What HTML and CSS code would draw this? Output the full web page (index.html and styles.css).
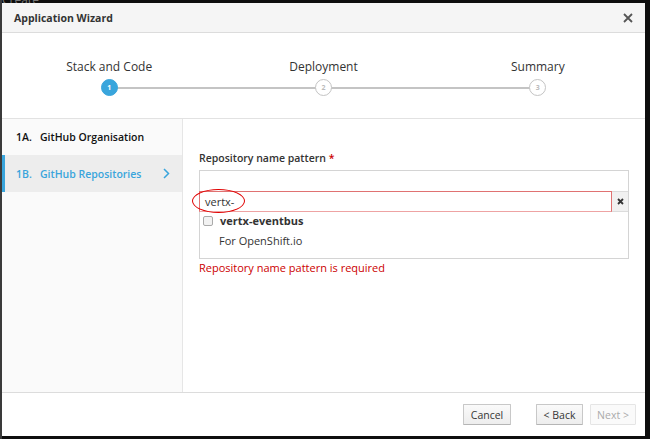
FILE: index.html
```html
<!DOCTYPE html>
<html>
<head>
<meta charset="utf-8">
<link rel="stylesheet" href="styles.css">
</head>
<body>
<div class="backdrop-text">Create</div>
<div class="modal">
  <div class="modal-header">
    <span class="title">Application Wizard</span>
    <svg class="close" width="10" height="10" viewBox="0 0 10 10"><path d="M1 1L9 9M9 1L1 9" stroke="#555" stroke-width="1.8"/></svg>
  </div>
  <div class="steps">
    <div class="step active">
      <div class="step-label">Stack and Code</div>
      <div class="step-track"><span class="dot">1</span></div>
    </div>
    <div class="step">
      <div class="step-label">Deployment</div>
      <div class="step-track"><span class="dot">2</span></div>
    </div>
    <div class="step">
      <div class="step-label">Summary</div>
      <div class="step-track"><span class="dot">3</span></div>
    </div>
  </div>
  <div class="body">
    <div class="sidebar">
      <div class="sub"><span class="num">1A.</span><span>GitHub Organisation</span></div>
      <div class="sub current"><span class="num">1B.</span><span>GitHub Repositories</span>
        <svg class="chev" width="7" height="11" viewBox="0 0 7 11"><path d="M1 1L5.5 5.5L1 10" fill="none" stroke="#39a5dc" stroke-width="1.5"/></svg>
      </div>
    </div>
    <div class="main">
      <div class="label">Repository name pattern <span class="req">*</span></div>
      <div class="picker">
        <div class="input-row">
          <div class="input">vertx-</div>
          <div class="clear"><svg width="7" height="7" viewBox="0 0 7 7"><path d="M1 1L6 6M6 1L1 6" stroke="#333" stroke-width="1.8"/></svg></div>
          <span class="ellipse"></span>
        </div>
        <div class="option">
          <span class="check"></span><span class="opt-name">vertx-eventbus</span>
        </div>
        <div class="opt-desc">For OpenShift.io</div>
      </div>
      <div class="error">Repository name pattern is required</div>
    </div>
  </div>
  <div class="footer">
    <button class="btn cancel">Cancel</button>
    <button class="btn back">&lt; Back</button>
    <button class="btn next disabled">Next &gt;</button>
  </div>
</div>
</body>
</html>
```
FILE: styles.css
```css
html, body {
  margin: 0;
  padding: 0;
}
body {
  width: 650px;
  height: 439px;
  font-family: "Open Sans", "Liberation Sans", sans-serif;
  color: #363636;
  position: relative;
  overflow: hidden;
  box-sizing: border-box;
  padding: 3px 5px 3px 2px;
  background: linear-gradient(to right, #3a3a3a 0, #3a3a3a 2px, #0e0e0e 2px);
}
.backdrop-text {
  position: absolute;
  left: 2px;
  top: -9px;
  font-size: 12px;
  color: #777;
}
.modal {
  width: 643px;
  height: 433px;
  background: #fff;
  display: flex;
  flex-direction: column;
  position: relative;
}
.modal-header {
  height: 29px;
  background: #f5f5f5;
  border-bottom: 1px solid #dcdcdc;
  display: flex;
  align-items: center;
  justify-content: space-between;
  padding: 0 12px 0 12px;
  flex: none;
}
.title {
  font-size: 10.5px;
  font-weight: 700;
  color: #333;
}
.close { margin-top: 1px; }
.steps {
  height: 85px;
  display: flex;
  border-bottom: 1px solid #e2e2e2;
  flex: none;
}
.step {
  flex: 1;
  display: flex;
  flex-direction: column;
  align-items: center;
}
.step-label {
  font-size: 12px;
  color: #333;
  margin-top: 25px;
  line-height: 17px;
}
.step-track {
  position: relative;
  width: 100%;
  height: 17px;
  margin-top: 4px;
  display: flex;
  justify-content: center;
}
.step-track::before {
  content: "";
  position: absolute;
  top: 8px;
  height: 2px;
  background: #c4c4c4;
  left: 0;
  right: 0;
}
.step:first-child .step-track::before { left: 50%; }
.step:last-child .step-track::before { right: 50%; }
.dot {
  position: relative;
  width: 15px;
  height: 15px;
  border-radius: 50%;
  border: 1px solid #c4c4c4;
  background: #fff;
  color: #bbb;
  font-size: 7px;
  font-weight: 700;
  display: flex;
  align-items: center;
  justify-content: center;
}
.step.active .dot {
  background: #39a5dc;
  border-color: #39a5dc;
  color: #fff;
}
.body {
  flex: 1;
  display: flex;
  min-height: 0;
}
.sidebar {
  width: 180px;
  background: #fafafa;
  border-right: 1px solid #e6e6e6;
  flex: none;
}
.sub {
  height: 36px;
  display: flex;
  align-items: center;
  padding-left: 14px;
  font-size: 10.5px;
  font-weight: 600;
  color: #111;
  position: relative;
}
.sub .num { width: 24px; }
.sub.current {
  background: #ededed;
  color: #39a5dc;
  border-left: 3px solid #39a5dc;
  padding-left: 11px;
  height: 37px;
}
.chev {
  position: absolute;
  left: 158px;
  top: 13px;
}
.main {
  flex: 1;
  padding: 32px 14px 0 16px;
  position: relative;
}
.label {
  font-size: 10.5px;
  font-weight: 600;
  color: #333;
  line-height: 14px;
}
.req { color: #c00; }
.picker {
  margin-top: 5px;
  width: 430px;
  border: 1px solid #d4d4d4;
  padding-top: 20px;
  box-sizing: border-box;
  height: 89px;
}
.input-row {
  display: flex;
  height: 21px;
  margin-left: -1px;
  position: relative;
}
.input {
  width: 413px;
  box-sizing: border-box;
  border: 1px solid #e07272;
  border-bottom-color: #eea3a3;
  font-size: 11px;
  color: #333;
  padding-left: 5px;
  line-height: 19px;
}
.clear {
  flex: 1;
  background: #f1f1f1;
  border-top: 1px solid #dcdcdc;
  border-bottom: 1px solid #dcdcdc;
  display: flex;
  align-items: center;
  justify-content: center;
}
.ellipse {
  position: absolute;
  left: -7px;
  top: -2px;
  width: 51px;
  height: 22px;
  border: 1.5px solid #e00000;
  border-radius: 50%;
}
.option {
  display: flex;
  align-items: center;
  height: 19px;
  padding-left: 3px;
  margin-top: -1px;
}
.check {
  width: 8px;
  height: 8px;
  border: 1px solid #aaa;
  border-radius: 2px;
  background: #f2f2f2;
  margin-right: 7px;
}
.opt-name {
  font-size: 11px;
  font-weight: 700;
  color: #333;
}
.opt-desc {
  font-size: 11px;
  color: #333;
  padding-left: 19px;
  line-height: 20px;
  margin-top: 1px;
}
.error {
  margin-top: 2px;
  font-size: 11px;
  color: #c00;
  line-height: 14px;
}
.footer {
  height: 43px;
  border-top: 1px solid #dcdcdc;
  display: flex;
  align-items: center;
  justify-content: flex-end;
  padding-right: 9px;
  flex: none;
}
.btn {
  font-family: "Open Sans", "Liberation Sans", sans-serif;
  font-size: 10.5px;
  height: 21px;
  padding: 0;
  background: linear-gradient(#fafafa, #ededed);
  border: 1px solid #c8c8c8;
  border-bottom-color: #b5b5b5;
  border-radius: 1px;
  color: #363636;
  margin: 0;
  text-align: center;
}
.btn.cancel { width: 48px; }
.btn.back { width: 47px; margin-left: 25px; }
.btn.next { width: 46px; margin-left: 7px; }
.btn.disabled {
  background: #fafafa;
  border-color: #e5e5e5;
  color: #aaa;
}
```
